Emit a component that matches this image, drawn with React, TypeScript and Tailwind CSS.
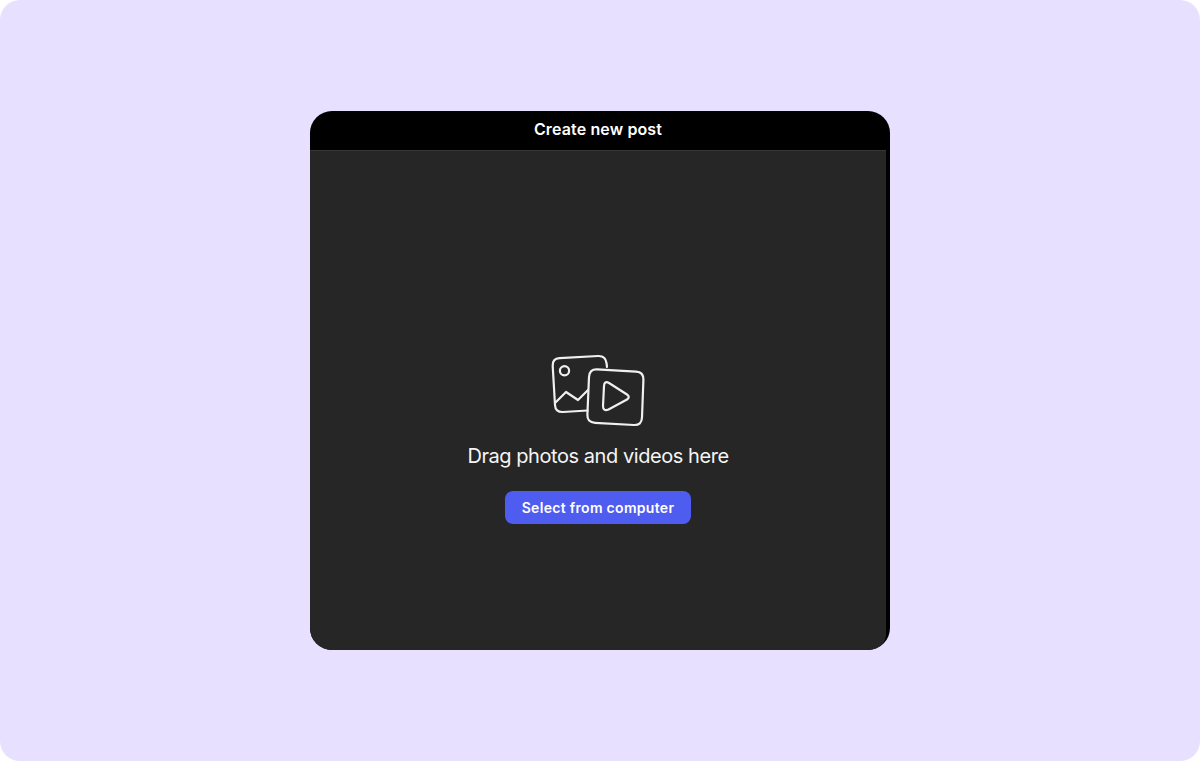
export default function App() {
  return (
    <div className="w-full h-[761px] bg-white" style={{ fontFamily: "Inter, sans-serif" }}>
      <div className="w-full h-full rounded-[20px] bg-[#e7e0ff] flex items-center justify-center">
        <div className="w-[580px] h-[539px] bg-black rounded-[22px] overflow-hidden flex flex-col">
          <div className="w-[576px] h-[40px] shrink-0 flex items-center justify-center border-b border-[#363636] pb-[4px]">
            <span className="text-white text-base font-semibold leading-none tracking-[0.13px]">Create new post</span>
          </div>
          <div className="w-[576px] flex-1 bg-[#262626] rounded-br-[16px] flex flex-col items-center pt-[199px]">
            <svg width="96" height="78" viewBox="0 0 96 78" fill="none" stroke="#f0f0f0" strokeWidth="2.2" strokeLinecap="round" strokeLinejoin="round" className="block">
              <path d="M37.5 60.5 L13 62 Q5.3 62.4 5 55 L2.7 16 Q2.3 8.6 9.5 8.2 L48 6 Q55.5 5.6 56.5 13 L57 17" />
              <circle cx="14.5" cy="20.7" r="4.6" />
              <path d="M5 53 L16 42 L28 50 L38 40" />
              <path d="M47 19.4 L86 21.6 Q93.8 22 93.4 30 L92 67.5 Q91.6 75.4 84 75 L45 72.8 Q37 72.4 37.4 64.5 L39 27 Q39.4 19 47 19.4 Z" />
              <path d="M53 56 L54 36 Q54.3 30.5 59 33 L77 44.5 Q80.5 47 77 49.5 L58.5 59.5 Q53 61.5 53 56 Z" />
            </svg>
            <div className="mt-[13px] text-[20px] leading-[30px] text-[#f5f5f5] font-normal tracking-[-0.44px]">Drag photos and videos here</div>
            <button className="mt-[20px] w-[186px] h-[33px] rounded-lg bg-[#4f5cf0] text-white text-sm font-semibold tracking-[0.3px] flex items-center justify-center">Select from computer</button>
          </div>
        </div>
      </div>
    </div>
  );
}
